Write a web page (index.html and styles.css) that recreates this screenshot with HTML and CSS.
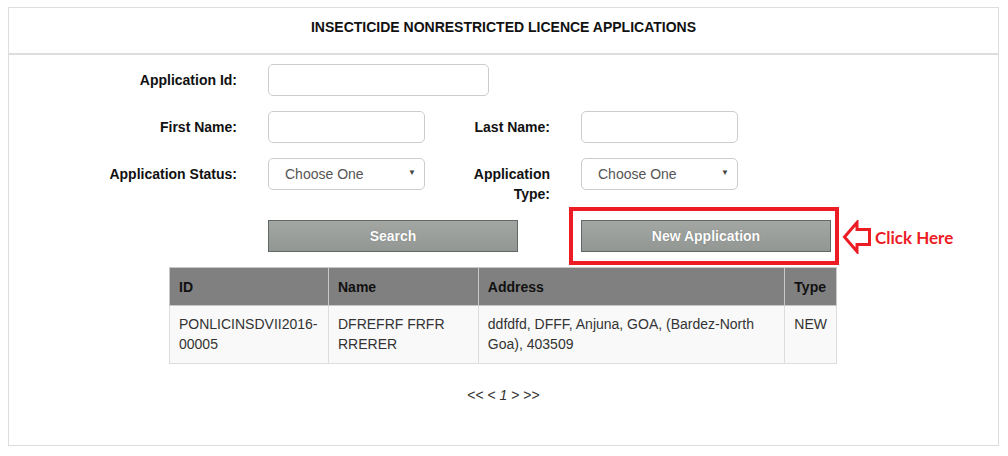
FILE: index.html
```html
<!DOCTYPE html>
<html lang="en">
<head>
    <meta charset="UTF-8">
    <meta name="viewport" content="width=device-width, initial-scale=1.0">
    <title>Insecticide Licence Applications</title>
    <link rel="stylesheet" href="styles.css">
</head>
<body>
    <div class="panel">
        <div class="panel-heading">INSECTICIDE NONRESTRICTED LICENCE APPLICATIONS</div>

        <div class="search-form">
            <label class="field-label">Application Id:</label>
            <div class="field field-wide"><input type="text" class="form-input wide"></div>

            <label class="field-label">First Name:</label>
            <div class="field"><input type="text" class="form-input"></div>
            <label class="field-label">Last Name:</label>
            <div class="field"><input type="text" class="form-input"></div>

            <label class="field-label">Application Status:</label>
            <div class="field">
                <div class="select-box">
                    <select class="form-select"><option>Choose One</option></select>
                </div>
            </div>
            <label class="field-label">Application Type:</label>
            <div class="field">
                <div class="select-box">
                    <select class="form-select"><option>Choose One</option></select>
                </div>
            </div>

            <div class="button-cell search-cell">
                <button class="btn">Search</button>
            </div>
            <div class="button-cell new-cell">
                <button class="btn">New Application</button>
                <div class="highlight"></div>
                <div class="callout">
                    <svg width="30" height="34" viewBox="0 0 30 34">
                        <path d="M2.5 17 L15 2.5 L15 9.5 L27.5 9.5 L27.5 24.5 L15 24.5 L15 31.5 Z" fill="none" stroke="#ed1c24" stroke-width="3" stroke-linejoin="miter"/>
                    </svg>
                    <span>Click Here</span>
                </div>
            </div>
        </div>

        <table class="results">
            <tr>
                <th class="col-id">ID</th>
                <th class="col-name">Name</th>
                <th class="col-address">Address</th>
                <th class="col-type">Type</th>
            </tr>
            <tr>
                <td>PONLICINSDVII2016-00005</td>
                <td>DFREFRF FRFR RRERER</td>
                <td>ddfdfd, DFFF, Anjuna, GOA, (Bardez-North Goa), 403509</td>
                <td>NEW</td>
            </tr>
        </table>

        <div class="pager">&lt;&lt; &lt; <a href="#" class="page-link">1</a> &gt; &gt;&gt;</div>
    </div>
</body>
</html>
```

FILE: styles.css
```css
body {
    margin: 0;
    padding: 7px 9px 0 8px;
    font-family: "Liberation Sans", Arial, sans-serif;
    font-size: 14px;
    color: #333;
    background-color: #fff;
}

.panel {
    height: 437px;
    border: 1px solid #ddd;
}

.panel-heading {
    height: 45px;
    line-height: 38px;
    text-align: center;
    font-size: 14px;
    font-weight: bold;
    color: #111;
    border-bottom: 2px solid #ddd;
}

.search-form {
    display: grid;
    grid-template-columns: 160px 157px 94px 157px;
    column-gap: 31px;
    row-gap: 15px;
    margin: 9px 0 0 68px;
}

.field-label {
    padding-top: 6px;
    line-height: 20px;
    text-align: right;
    font-weight: bold;
    color: #111;
}

.field-wide {
    grid-column: 2 / 5;
}

.form-input {
    box-sizing: border-box;
    width: 157px;
    height: 32px;
    border: 1px solid #ccc;
    border-radius: 5px;
    font-family: inherit;
}

.form-input.wide {
    width: 221px;
}

.select-box {
    position: relative;
    width: 157px;
}

.select-box::after {
    content: "\25BC";
    position: absolute;
    right: 9px;
    top: 10px;
    font-size: 8px;
    color: #444;
    pointer-events: none;
}

.form-select {
    box-sizing: border-box;
    width: 157px;
    height: 32px;
    padding-left: 16px;
    border: 1px solid #ccc;
    border-radius: 5px;
    background-color: #fff;
    font-family: inherit;
    font-size: 14px;
    color: #555;
    appearance: none;
    -webkit-appearance: none;
}

.button-cell {
    position: relative;
    margin-top: 1px;
}

.search-cell {
    grid-column: 2 / 4;
}

.new-cell {
    grid-column: 4 / 5;
}

.btn {
    box-sizing: border-box;
    width: 250px;
    height: 32px;
    border: 1px solid #5e6a63;
    background: linear-gradient(#a3a6a3, #939793);
    color: #fff;
    font-family: inherit;
    font-size: 14px;
    font-weight: bold;
    text-shadow: 0 0 1px #666;
    cursor: pointer;
}

.btn:hover {
    background: #8a8d8a;
}

.highlight {
    position: absolute;
    top: -13px;
    left: -12px;
    width: 262px;
    height: 50px;
    border: 4px solid #ed1c24;
}

.callout {
    position: absolute;
    top: 0;
    left: 261px;
    display: flex;
    align-items: center;
    gap: 3px;
    color: #ed1c24;
    font-family: Lato, "Liberation Sans", sans-serif;
    font-size: 17px;
    font-weight: bold;
    white-space: nowrap;
}

.callout svg {
    display: block;
}

.results {
    width: 668px;
    margin: 15px 0 0 160px;
    border-collapse: collapse;
    border: 1px solid #ddd;
}

.results th,
.results td {
    padding: 8px 9px;
    line-height: 20px;
    text-align: left;
    vertical-align: top;
    border: 1px solid #ddd;
}

.results th {
    padding-top: 9px;
    background-color: #808080;
    color: #111;
    border-color: #c8c8c8;
}

.results td {
    padding-bottom: 9px;
    background-color: #f9f9f9;
}

.col-id { width: 140px; }
.col-name { width: 131px; }
.col-address { width: 288px; }

.pager {
    margin-top: 23px;
    text-align: center;
    font-size: 14px;
    color: #333;
}

.page-link {
    color: #333;
    font-style: italic;
    text-decoration: none;
}
```
